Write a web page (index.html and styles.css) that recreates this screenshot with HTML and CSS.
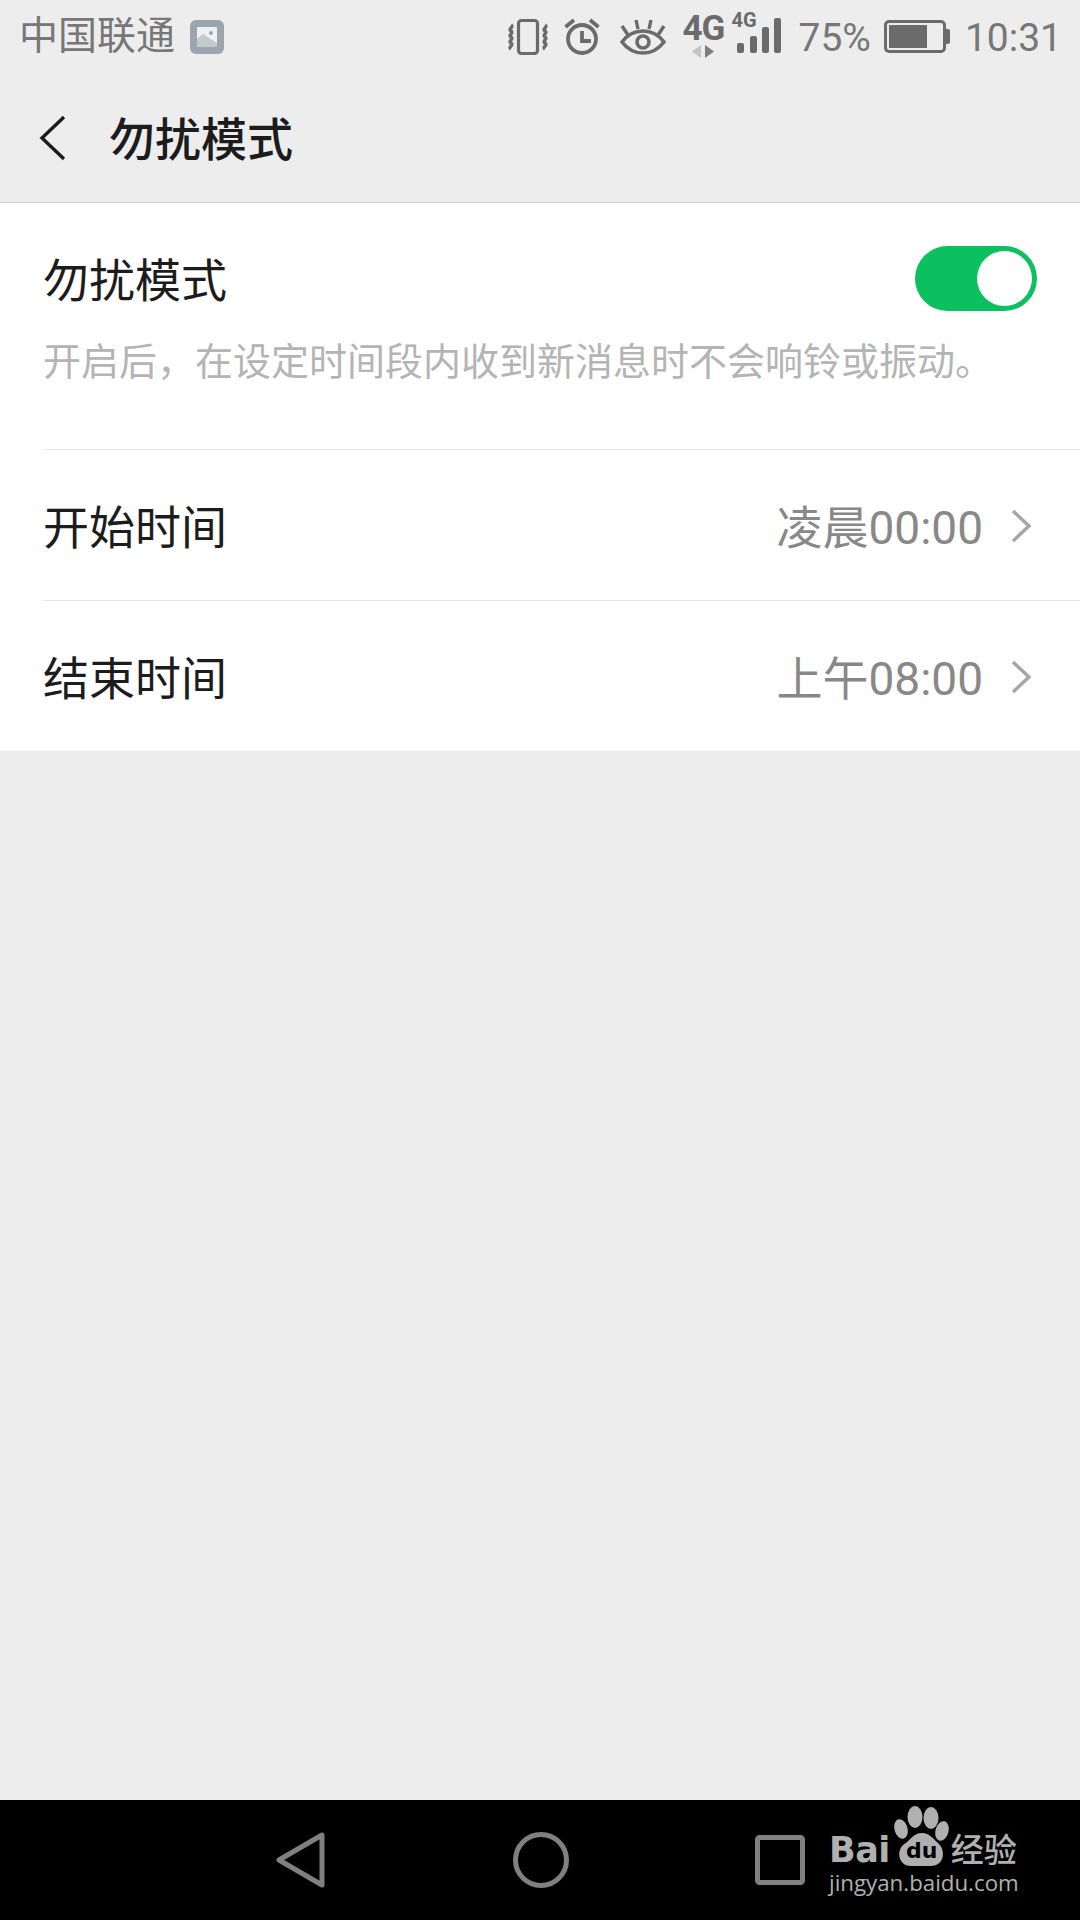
FILE: index.html
```html
<!DOCTYPE html>
<html lang="zh-CN">
<head>
    <meta charset="UTF-8">
    <meta name="viewport" content="width=device-width, initial-scale=1.0">
    <title>勿扰模式</title>
    <link rel="stylesheet" href="styles.css">
</head>
<body>
    <div class="screen">
        <!-- Status bar -->
        <div class="status-bar">
            <span class="carrier">中国联通</span>
            <svg class="ic-gallery" width="34" height="34" viewBox="0 0 34 34">
                <rect width="34" height="34" rx="6" fill="#9aa5ad"/>
                <path d="M8 7h18a1 1 0 0 1 1 1v18a1 1 0 0 1-1 1H8a1 1 0 0 1-1-1V8a1 1 0 0 1 1-1z" fill="#eef0f1"/>
                <path d="M7 19l6-5 14 9v3a1 1 0 0 1-1 1H8a1 1 0 0 1-1-1z" fill="#c3cacf"/>
                <circle cx="21" cy="13" r="2" fill="#9aa5ad"/>
            </svg>
            <div class="status-right">
                <svg width="40" height="36" viewBox="0 0 40 36" fill="none" stroke="#6b6b6b">
                    <rect x="10.500" y="1.500" width="19" height="33" rx="3" stroke-width="3.200"/>
                    <path d="M3 6c3 2-3 4 0 6s-3 4 0 6 -3 4 0 6 -3 4 0 6" stroke-width="3.600"/>
                    <path d="M37 6c3 2-3 4 0 6s-3 4 0 6 -3 4 0 6 -3 4 0 6" stroke-width="3.600"/>
                </svg>
                <svg class="ic-alarm" width="36" height="37" viewBox="0 0 36 37" fill="none" stroke="#6b6b6b">
                    <circle cx="18" cy="21" r="14" stroke-width="3.800"/>
                    <path d="M18 13v10h9" stroke-width="3.800"/>
                    <path d="M1.500 9L10 2M34.500 9L26 2" stroke-width="3.800"/>
                </svg>
                <svg class="ic-eye" width="46" height="36" viewBox="0 0 46 36" fill="none" stroke="#6b6b6b">
                    <path d="M2 23C8 15 15 12 23 12s15 3 21 11c-6 8-13 11-21 11S8 31 2 23z" stroke-width="3.600"/>
                    <circle cx="23" cy="23" r="6" stroke-width="3.600"/>
                    <path d="M2 7l6 9M16 1l2 9M31 1l-2 9M44 7l-6 9" stroke-width="3.400"/>
                </svg>
                <div class="net">
                    <span class="net-label">4G</span>
                    <svg width="24" height="15" viewBox="0 0 24 15">
                        <path d="M10 1v13L1 7.500z" fill="#c4c4c4"/>
                        <path d="M14 1v13l9-6.500z" fill="#7c7c7c"/>
                    </svg>
                </div>
                <div class="signal">
                    <span class="signal-label">4G</span>
                    <div class="bars">
                        <i class="bar bar-1"></i>
                        <i class="bar bar-2"></i>
                        <i class="bar bar-3"></i>
                        <i class="bar bar-4"></i>
                    </div>
                </div>
                <span class="percent">75%</span>
                <div class="battery">
                    <div class="battery-body"><div class="battery-fill"></div></div>
                    <div class="battery-tip"></div>
                </div>
                <span class="clock">10:31</span>
            </div>
        </div>

        <!-- Title bar -->
        <div class="title-bar">
            <svg class="back" width="28" height="46" viewBox="0 0 28 46" fill="none" stroke="#1c1c1c" stroke-width="3.400">
                <path d="M25 2L3 23l22 21"/>
            </svg>
            <h1>勿扰模式</h1>
        </div>

        <div class="list">
            <div class="row row-switch">
                <div class="row-top">
                    <span class="row-title">勿扰模式</span>
                    <div class="switch"><div class="knob"></div></div>
                </div>
                <p class="row-desc">开启后，在设定时间段内收到新消息时不会响铃或振动。</p>
            </div>
            <div class="row row-time">
                <span class="row-title">开始时间</span>
                <span class="row-value">凌晨00:00</span>
                <svg class="chevron" width="22" height="34" viewBox="0 0 22 34" fill="none" stroke="#a6a6a6" stroke-width="3.400">
                    <path d="M3 2l16 15L3 32"/>
                </svg>
            </div>
            <div class="row row-time">
                <span class="row-title">结束时间</span>
                <span class="row-value">上午08:00</span>
                <svg class="chevron" width="22" height="34" viewBox="0 0 22 34" fill="none" stroke="#a6a6a6" stroke-width="3.400">
                    <path d="M3 2l16 15L3 32"/>
                </svg>
            </div>
        </div>

        <div class="empty"></div>

        <!-- Navigation bar -->
        <div class="nav-bar">
            <svg width="50" height="56" viewBox="0 0 50 56" fill="none" stroke="#808080" stroke-width="5" stroke-linejoin="round">
                <path d="M46 3v50L3 28z"/>
            </svg>
            <svg width="56" height="56" viewBox="0 0 56 56" fill="none" stroke="#808080" stroke-width="5">
                <circle cx="28" cy="28" r="25.500"/>
            </svg>
            <svg width="50" height="50" viewBox="0 0 50 50" fill="none" stroke="#808080" stroke-width="5" stroke-linejoin="round">
                <rect x="2.500" y="2.500" width="45" height="45" rx="2"/>
            </svg>
        </div>
    </div>

    <!-- Watermark -->
    <div class="watermark">
        <div class="wm-top">
            <span class="wm-bai">Bai</span>
            <div class="wm-paw">
                <svg width="56" height="62" viewBox="0 0 56 62" fill="#b0b0b0">
                    <ellipse cx="22" cy="11" rx="7.500" ry="11"/>
                    <ellipse cx="38" cy="12" rx="7.500" ry="11"/>
                    <ellipse cx="8" cy="23" rx="6.500" ry="10" transform="rotate(-15 8 23)"/>
                    <ellipse cx="49" cy="25" rx="6.500" ry="10" transform="rotate(15 49 25)"/>
                    <path d="M29 27c8 0 11 6 17 11 7 7 5 22-8 22H18C6 60 3 46 10 39c7-4 10-12 19-12z"/>
                </svg>
                <span class="wm-du">du</span>
            </div>
            <span class="wm-cn">经验</span>
        </div>
        <div class="wm-url">jingyan.baidu.com</div>
    </div>
</body>
</html>
```

FILE: styles.css
```css
* {
    margin: 0;
    padding: 0;
    box-sizing: border-box;
}

body {
    width: 1080px;
    height: 1920px;
    overflow: hidden;
    background-color: #ededed;
    font-family: Roboto, "Noto Sans CJK SC", sans-serif;
    position: relative;
}

.screen {
    height: 1920px;
    display: flex;
    flex-direction: column;
}

/* Status bar */
.status-bar {
    height: 73px;
    display: flex;
    align-items: center;
    padding: 0 18px 0 19px;
    color: #777;
    flex-shrink: 0;
}

.carrier {
    font-size: 39px;
    line-height: 73px;
}

.ic-gallery {
    margin-left: 15px;
}

.status-right {
    margin-left: auto;
    display: flex;
    align-items: center;
    color: #6b6b6b;
}

.ic-alarm {
    margin-left: 16px;
}

.ic-eye {
    margin-left: 20px;
}

.net {
    margin-left: 18px;
    width: 38px;
    display: flex;
    flex-direction: column;
    align-items: center;
}

.net-label {
    font-size: 35px;
    font-weight: 700;
    line-height: 30px;
    letter-spacing: -1px;
}

.signal {
    margin: 0 0 9px 9px;
    width: 50px;
    height: 42px;
    position: relative;
}

.signal-label {
    position: absolute;
    left: 0;
    top: -2px;
    font-size: 20px;
    font-weight: 700;
    line-height: 22px;
}

.bars {
    height: 42px;
    display: flex;
    align-items: flex-end;
    justify-content: space-between;
    padding-left: 6px;
}

.bar {
    width: 7px;
    background-color: #6b6b6b;
    border-radius: 2px;
}

.bar-1 { height: 10px; }
.bar-2 { height: 17px; }
.bar-3 { height: 26px; }
.bar-4 { height: 35px; }

.percent {
    margin: 2px 0 0 17px;
    font-size: 39px;
    color: #777;
}

.battery {
    margin-left: 13px;
    display: flex;
    align-items: center;
}

.battery-body {
    width: 62px;
    height: 33px;
    border: 3px solid #6b6b6b;
    border-radius: 5px;
    padding: 2px;
}

.battery-fill {
    width: 38px;
    height: 100%;
    background-color: #6b6b6b;
}

.battery-tip {
    width: 4px;
    height: 15px;
    background-color: #6b6b6b;
    border-radius: 0 2px 2px 0;
}

.clock {
    margin: 2px 0 0 15px;
    font-size: 39px;
    color: #777;
}

/* Title bar */
.title-bar {
    height: 130px;
    display: flex;
    align-items: center;
    padding-left: 39px;
    border-bottom: 1px solid #cfcfcf;
    flex-shrink: 0;
}

.back {
    margin-right: 42px;
}

h1 {
    margin-bottom: 4px;
    font-size: 46px;
    font-weight: 500;
    color: #1c1c1c;
}

/* List */
.list {
    background-color: #fff;
    padding-left: 43px;
    flex-shrink: 0;
}

.row {
    border-bottom: 1px solid #e4e4e4;
}

.row:last-child {
    border-bottom: none;
}

.row-switch {
    height: 247px;
    padding: 43px 43px 0 0;
}

.row-top {
    height: 65px;
    display: flex;
    align-items: center;
    justify-content: space-between;
}

.row-top .row-title {
    margin-bottom: 4px;
}

.row-title {
    font-size: 46px;
    color: #1c1c1c;
}

.switch {
    width: 122px;
    height: 65px;
    background-color: #0bc15f;
    border-radius: 33px;
    padding: 5px;
    display: flex;
    justify-content: flex-end;
}

.knob {
    width: 55px;
    height: 55px;
    background-color: #fff;
    border-radius: 50%;
}

.row-desc {
    margin-top: 26px;
    font-size: 38px;
    line-height: 50px;
    color: #b4b4b4;
    white-space: nowrap;
}

.row-time {
    height: 151px;
    display: flex;
    align-items: center;
    padding-right: 48px;
}

.row-time:last-child {
    height: 150px;
}

.row-time .row-title,
.row-value {
    margin-bottom: 2px;
}

.row-value {
    margin-left: auto;
    font-size: 46px;
    color: #888;
}

.chevron {
    margin: 2px 0 0 27px;
}

.empty {
    flex: 1;
}

/* Navigation bar */
.nav-bar {
    height: 120px;
    background-color: #000;
    display: flex;
    align-items: center;
    padding: 0 275px 0 276px;
    justify-content: space-between;
    flex-shrink: 0;
}

/* Watermark */
.watermark {
    position: absolute;
    left: 829px;
    top: 1806px;
    width: 195px;
    color: #b0b0b0;
}

.wm-top {
    height: 62px;
    display: flex;
    align-items: flex-end;
}

.wm-bai {
    font-family: "DejaVu Sans", sans-serif;
    font-size: 35px;
    font-weight: 700;
    line-height: 26px;
    margin-bottom: 5px;
    letter-spacing: -0.5px;
}

.wm-paw {
    position: relative;
    width: 56px;
    height: 62px;
    margin-left: 3px;
    flex-shrink: 0;
}

.wm-du {
    position: absolute;
    left: 10px;
    top: 32px;
    width: 38px;
    text-align: center;
    font-family: "DejaVu Sans", sans-serif;
    font-size: 22px;
    font-weight: 700;
    line-height: 26px;
    color: #000;
}

.wm-cn {
    margin: 0 0 1px 2px;
    font-size: 33px;
    line-height: 33px;
    font-weight: 500;
    white-space: nowrap;
}

.wm-url {
    margin-top: 2px;
    font-family: "Open Sans", sans-serif;
    font-size: 22.3px;
    line-height: 26px;
    white-space: nowrap;
}
```
